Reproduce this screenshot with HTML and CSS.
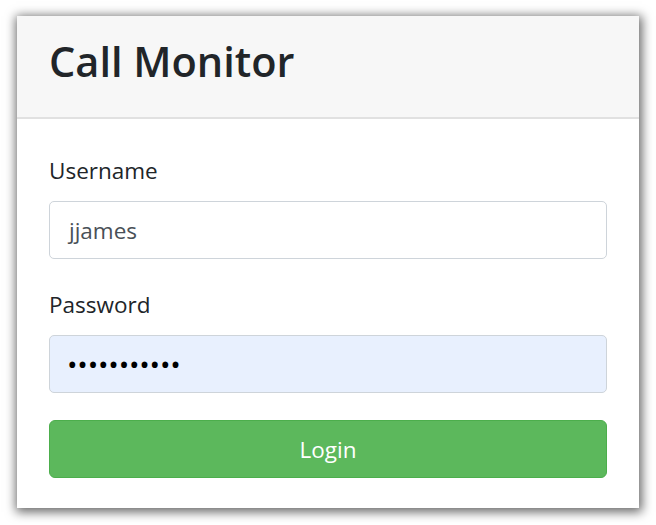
FILE: index.html
```html
<!DOCTYPE html>
<html>
<head>
<meta charset="utf-8">
<link rel="stylesheet" href="styles.css">
</head>
<body>
<div class="page">
  <div class="card">
    <div class="card-header">
      <h1 class="title">Call Monitor</h1>
    </div>
    <form class="card-body">
      <label class="label">Username</label>
      <div class="input">jjames</div>
      <label class="label label-2">Password</label>
      <div class="input input-pw">•••••••••••</div>
      <div class="btn">Login</div>
    </form>
  </div>
</div>
</body>
</html>
```
FILE: styles.css
```css
* { box-sizing: border-box; }
html, body { margin: 0; padding: 0; background: #ffffff; }
body { font-family: "Open Sans", "Noto Sans", sans-serif; color: #212529; }
.page { padding: 16px 17px; }
.card {
  width: 622px;
  height: 492px;
  background: #fff;
  box-shadow: 1px 2px 10px 2px rgba(0,0,0,0.6);
  display: flex;
  flex-direction: column;
}
.card-header {
  height: 103px;
  background: #f7f7f7;
  border-bottom: 2px solid #e1e1e1;
  padding: 0 32px 10px;
  display: flex;
  align-items: center;
}
.title {
  margin: 0;
  font-size: 41.5px;
  font-weight: 600;
  line-height: 1;
  color: #212529;
  letter-spacing: 0;
}
.card-body {
  margin: 0;
  padding: 37px 32px 0;
  display: flex;
  flex-direction: column;
}
.label {
  font-size: 22.5px;
  line-height: 30px;
  color: #212529;
  margin-bottom: 15px;
}
.label-2 { margin-top: 31px; }
.input {
  height: 58px;
  border: 1px solid #ced4da;
  border-radius: 5px;
  padding: 0 19px;
  display: flex;
  align-items: center;
  font-size: 22.5px;
  color: #495057;
}
.input-pw {
  background: #e8f0fe;
  color: #000;
  font-size: 28px;
  letter-spacing: -0.2px;
  padding-left: 17px;
}
.btn {
  margin-top: 27px;
  height: 58px;
  background: #5cb85c;
  border: 1px solid #4cae4c;
  border-radius: 6px;
  color: #fff;
  font-size: 22.5px;
  display: flex;
  align-items: center;
  justify-content: center;
}
```
